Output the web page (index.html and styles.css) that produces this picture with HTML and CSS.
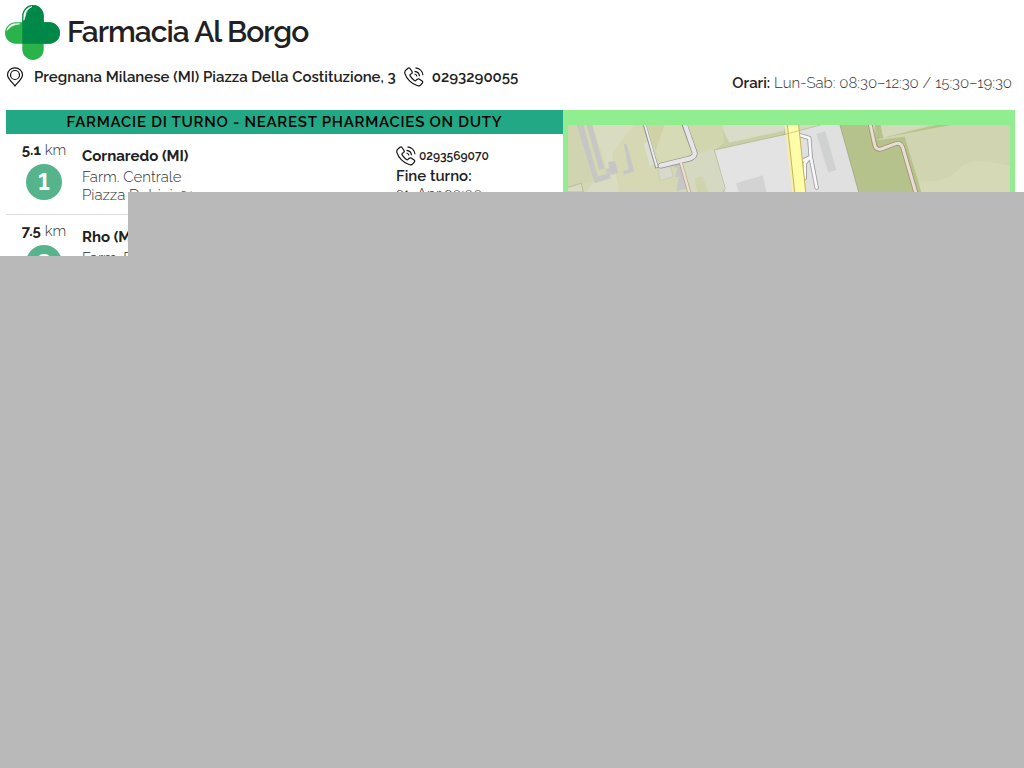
FILE: index.html
```html
<!DOCTYPE html>
<html lang="it">
<head>
<meta charset="utf-8">
<meta name="viewport" content="width=device-width, initial-scale=1">
<title>Farmacia Al Borgo</title>
<link rel="stylesheet" href="styles.css">
</head>
<body>
<svg class="symbols" aria-hidden="true">
  <symbol id="phone" viewBox="0 0 20 20">
    <path d="M2.2 2.8 4 1.2c.7-.5 1.5-.4 2 .3l2 3c.4.7.3 1.4-.3 1.9L6.300 7.500c-.5.500-.4 1.100 0 1.700 1 1.500 2.400 3 4 4.200.6.500 1.200.5 1.700 0l1.200-1.100c.6-.5 1.200-.6 1.900-.2l3 2c.7.5.8 1.300.2 2l-1.500 1.700c-.9 1-2.300 1.200-3.800.7C7.500 17 2.600 11.800.9 6.600.5 5 1 3.700 2.200 2.800Z"/>
    <path d="M10.500 4.300c2.800.2 4.800 2.200 5 5M11.500.8c4 .4 7.100 3.500 7.500 7.500M10.500 7c1.300.2 2.200 1.100 2.400 2.400"/>
  </symbol>
</svg>
<header class="header">
  <div class="brand">
    <svg class="logo" viewBox="0 0 54 54" aria-hidden="true">
      <rect x="0" y="17" width="54" height="21" rx="10.500" fill="#29b34a"/>
      <rect x="17" y="0" width="21" height="54" rx="10.500" fill="#29b34a"/>
      <path d="M17 38V10.500a10.500 10.500 0 0 1 21 0V17h5.500a10.500 10.500 0 0 1 0 21Z" fill="#008848"/>
      <path d="M18.500 15V11c0-5 3-8.500 8-9.500-4 2-6 5-6.500 9ZM2 25c1-4 4-6.500 8.500-6.500h4C9 19 5 21 2 25Z" fill="#fff" stroke="#fff" stroke-width=".6"/>
    </svg>
    <h1 class="title">Farmacia Al Borgo</h1>
  </div>
  <div class="info">
    <div class="contact">
      <svg class="pin" viewBox="0 0 18 20" aria-hidden="true">
        <path d="M9 19C7 16 1.500 12 1.500 7.800a7.500 7 0 0 1 15 0C16.500 12 11 16 9 19Z"/>
        <circle cx="9" cy="8" r="4.500"/>
      </svg>
      <span class="address">Pregnana Milanese (MI) Piazza Della Costituzione, 3</span>
      <svg class="phone" aria-hidden="true"><use href="#phone"/></svg>
      <span class="number">0293290055</span>
    </div>
    <p class="hours"><b>Orari:</b> Lun-Sab: 08:30–12:30 / 15:30–19:30</p>
  </div>
</header>
<main class="main">
  <section class="duty">
    <h2 class="bar">FARMACIE DI TURNO - NEAREST PHARMACIES ON DUTY</h2>
    <article class="row">
      <div class="distance"><span><b>5.1</b> km</span><span class="badge">1</span></div>
      <div class="place"><h3>Cornaredo (MI)</h3><p>Farm. Centrale</p><p>Piazza Dubini, 21</p></div>
      <div class="shift">
        <div class="call"><svg class="phone" aria-hidden="true"><use href="#phone"/></svg><b>0293569070</b></div>
        <p class="end">Fine turno:</p><p>21, Apr 20:00</p>
      </div>
    </article>
    <article class="row">
      <div class="distance"><span><b>7.5</b> km</span><span class="badge">2</span></div>
      <div class="place"><h3>Rho (MI)</h3><p>Farm. Rho</p></div>
    </article>
  </section>
  <section class="mapbox">
    <svg class="map" viewBox="0 0 1326 201" preserveAspectRatio="xMinYMin slice" role="img" aria-label="Mappa">
      <rect width="1326" height="201" fill="#d3d7b3"/>
      <g transform="translate(-36 -75)">
        <path d="M36 75H60L112 245 36 262Z" fill="#d1d4b0"/>
        <path d="M110 75H236L205 125 170 160 190 276H90L112 245 160 235Z" fill="#d9dcc1"/>
        <path d="M236 75H262L300 200 370 276H190L170 160 205 110Z" fill="#d5d8b2"/>
        <path d="M275 75H325L310 145 298 150Z" fill="#d0d1a5"/>
        <path d="M325 75H380L408 160 315 187 300 150Z" fill="#d6dab5"/>
        <path d="M394 75H500L510 125 425 155Z" fill="#d2d6ae"/>
        <path d="M262 130 285 122 304 190 282 198Z" fill="#dcded2"/>
        <path d="M376 175 475 148 510 266 505 276H408Z" fill="#d6d9c1"/>
        <path d="M415 235 440 230 456 276H424Z" fill="#d0d4aa"/>
        <path d="M500 75H690L684 100 512 130Z" fill="#d8dcc8"/>
        <path d="M500 90 520 128 682 92 684 104 476 150 505 128Z" fill="#c7cfa4"/>
        <path d="M475 150 685 104H700L720 276H508Z" fill="#e3e3e4"/>
        <path d="M540 250 620 226 632 276H548Z" fill="#d3d3d4"/>
        <path d="M508 266 475 150 684 104 690 75M684 104 720 95M508 266 500 276" fill="none" stroke="#a9b086" stroke-width="2"/>
        <path d="M62 75H82L125 230 155 220 148 208 160 205 164 235 116 250ZM92 75H108L145 206 130 210ZM156 187 176 182 187 219 164 225ZM204 133 211 131 235 214 204 224 201 213 218 208Z" fill="#c6c7c4"/>
        <path d="M36 262 76 250 82 276H36" fill="#d9dcc1" stroke="#a9b086" stroke-width="2"/>
        <path d="M306 204 340 192 352 228 346 232 312 241Z" fill="#d7d9cc" stroke="#b6b99c"/>
        <path d="M340 192 370 190 392 265 362 274 368 232 358 230 364 205Z" fill="#c6c6c5"/>
        <path d="M266 75 303 204" fill="none" stroke="#888" stroke-width="10"/>
        <path d="M266 72 303 202" fill="none" stroke="#eeeeee" stroke-width="6"/>
        <path d="M386 75 415 155Q420 170 400 176L314 197" fill="none" stroke="#8b8b89" stroke-width="17" stroke-linecap="round"/>
        <path d="M386 72 415 155Q420 170 400 176L314 197" fill="none" stroke="#e6e6e8" stroke-width="13" stroke-linecap="round"/>
        <path d="M374 188 400 278" fill="none" stroke="#b9a184" stroke-width="11"/>
        <path d="M374 186 400 278" fill="none" stroke="#e6dfd7" stroke-width="7"/>
      </g>
      <g transform="translate(648 -75)">
        <path d="M20 75H168L224 276H20Z" fill="#e0e0e1"/>
        <path d="M168 75H260L400 276H224Z" fill="#b5c28b"/>
        <path d="M250 75H700V276H400L355 120 290 140Z" fill="#d0d4b1"/>
        <path d="M272 75H290L298 113 500 75H455L280 118Z" fill="#b5c28b"/>
        <path d="M270 85 284 120 362 110 412 276H380L345 140 280 150Z" fill="#b5c28b"/>
        <path d="M250 130 350 135 400 276H260Z" fill="#b5c28b"/>
        <path d="M290 75H435L298 112Z" fill="#d5d9bb"/>
        <path d="M404 244C470 250 500 235 530 202S630 188 700 202V276H412Z" fill="#d5d9b6"/>
        <path d="M40 75H108L46 93Z" fill="#d5d9bd"/>
        <path d="M168 75 224 276" stroke="#9da07e" stroke-width="2"/>
        <path d="M97 101 124 94 157 209 133 218Z" fill="#d0d1d1"/>
        <path d="M46 105 76 114 80 170 98 263M78 172 56 182M74 176 62 190V235" fill="none" stroke="#9b9b9b" stroke-width="13" stroke-linejoin="round" stroke-linecap="round"/>
        <path d="M46 105 76 114 80 170 98 263M78 172 56 182M74 176 62 190V235" fill="none" stroke="#f8f8f8" stroke-width="8" stroke-linejoin="round" stroke-linecap="round"/>
        <path d="M2 75H12L34 276H24Z" fill="#f4efb1"/>
        <path d="M10 75H44L65 276H32Z" fill="#fffda8"/>
        <path d="M10 75 32 276M44 75 65 276" stroke="#c9b25a" stroke-width="3"/>
        <path d="M-5 105 110 75" stroke="#b2b58e" stroke-width="2"/>
        <path d="M258 70 272 135Q276 151 292 147L335 131Q350 126 356 142L396 280" fill="none" stroke="#aa8f72" stroke-width="14"/>
        <path d="M258 70 272 135Q276 151 292 147L335 131Q350 126 356 142L396 280" fill="none" stroke="#e5dfd6" stroke-width="9"/>
      </g>
    </svg>
  </section>
</main>
<div class="cover"></div>
</body>
</html>
```
FILE: styles.css
```css
* { box-sizing: border-box; }
body {
  margin: 0;
  min-height: 100vh;
  overflow: hidden;
  background: #fff;
  color: #212121;
  font: 15px/18px Raleway, Lato, sans-serif;
}
h1, h2, h3, p { margin: 0; }
b, h3 { font-weight: 600; }
.symbols { display: none; }
.header { padding: 5px 12px 0 5px; }
.brand { display: flex; align-items: center; gap: 7px; }
.logo { width: 55px; height: 55px; }
.title { padding-bottom: 2px; font-size: 30px; line-height: 36px; font-weight: 600; letter-spacing: -1px; }
.info { display: flex; justify-content: space-between; align-items: flex-start; padding-top: 7px; }
.contact { display: flex; align-items: center; gap: 8px; font-weight: 600; }
.pin, .phone { width: 20px; height: 20px; fill: none; stroke: #111; stroke-width: 1.2; }
.address { padding-left: 1px; }
.hours { padding-top: 7px; color: #333; font-weight: 300; }
.hours b { color: #212121; }
.main { display: grid; grid-template-columns: 557fr 452fr; padding: 18px 9px 0 6px; }
.bar {
  background: #22a884;
  color: #000;
  font-size: 15px;
  line-height: 24px;
  font-weight: 600;
  letter-spacing: 0.05em;
  text-align: center;
}
.row {
  display: grid;
  grid-template-columns: 76px 1fr 167px;
  height: 81px;
  border-bottom: 1px solid #ddd;
  color: #333;
  font-weight: 300;
}
.row b, .end { color: #212121; font-weight: 600; }
.distance { display: flex; flex-direction: column; align-items: center; gap: 5px; padding-top: 7px; }
.distance b, .row h3 { color: #212121; font-weight: 700; }
.badge {
  width: 36px;
  height: 36px;
  border-radius: 50%;
  background: #56b48c;
  color: #fff;
  font-size: 24px;
  line-height: 36px;
  font-weight: 700;
  font-variant-numeric: lining-nums;
  text-align: center;
}
.place { padding-top: 11px; }
.row h3 { font-size: 15px; line-height: 23px; }
.shift { padding-top: 12px; line-height: 18px; }
.call { display: flex; align-items: center; gap: 3px; font-size: 12px; }
.end { padding-top: 1px; }
.mapbox { background: #90ee90; padding: 15px 5px 0; }
.map { display: block; width: 100%; height: auto; }
.cover {
  position: fixed;
  inset: 192px 0 0;
  background: #b9b9b9;
  clip-path: polygon(128px 0, 100% 0, 100% 100%, 0 100%, 0 64px, 128px 64px);
}
```
